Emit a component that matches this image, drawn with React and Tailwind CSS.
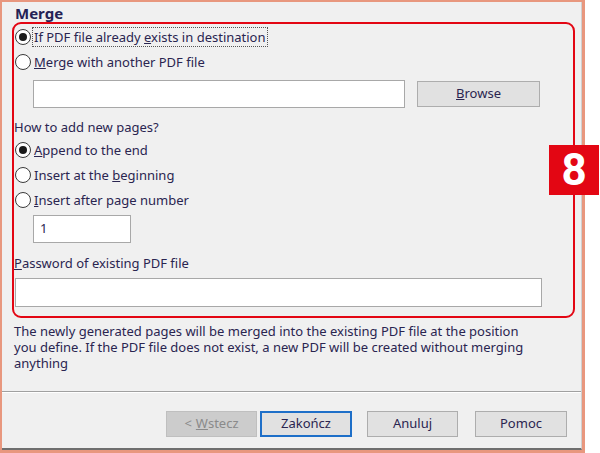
import React from 'react';

const font = { fontFamily: '"Noto Sans", "Open Sans", sans-serif' };

function Radio({ checked, children, focus }) {
  return (
    <div className="flex items-center h-[25px]">
      <div className="ml-[1px] w-[16px] h-[16px] rounded-full border border-[#3a3a3a] bg-white flex items-center justify-center shrink-0">
        {checked && <div className="w-[8px] h-[8px] rounded-full bg-[#1a1a1a]" />}
      </div>
      <span
        className={`ml-[2px] px-[1px] leading-[18px] ${
          focus ? 'outline outline-1 outline-dotted outline-[#555]' : ''
        }`}
      >
        {children}
      </span>
    </div>
  );
}

function Btn({ children, disabled, primary, className = '' }) {
  return (
    <div
      className={`h-[26px] flex items-center justify-center text-[13px] ${
        disabled
          ? 'bg-[#cccccc] border border-[#bfbfbf] text-[#8a8a8a]'
          : primary
          ? 'bg-[#e1e1e1] border-2 border-[#1e6fc8]'
          : 'bg-[#e1e1e1] border border-[#adadad]'
      } ${className}`}
    >
      {children}
    </div>
  );
}

export default function App() {
  return (
    <div className="w-[600px] h-[453px] bg-white relative overflow-hidden text-[#2a2550]" style={font}>
      <div className="w-[585px] h-[453px] border-t-2 border-l-2 border-r-[3px] border-b-[3px] border-[#e8977e]">
        <div className="h-full bg-[#f0f0f0] border-r border-r-[#d0d0d0] border-b-2 border-b-[#6e6e6e] flex flex-col">
          <div className="pl-[13px] pt-[1px] h-[20px] leading-[20px] text-[15px] font-bold text-[#252255]">Merge</div>

          <div className="ml-[10px] w-[563px] h-[296px] border-2 border-[#e30613] rounded-[9px] text-[13px]">
            <Radio checked focus>
              If PDF file already <span className="underline">e</span>xists in destination
            </Radio>
            <Radio>
              <span className="underline">M</span>erge with another PDF file
            </Radio>
            <div className="flex items-center mt-[6px] ml-[19px]">
              <div className="w-[372px] h-[28px] bg-white border border-[#a8a8a8]" />
              <Btn className="ml-[12px] w-[123px]">
                <span className="underline">B</span>rowse
              </Btn>
            </div>
            <div className="mt-[9px] h-[20px] leading-[20px]">How to add new pages?</div>
            <Radio checked>
              <span className="underline">A</span>ppend to the end
            </Radio>
            <Radio>
              Insert at the <span className="underline">b</span>eginning
            </Radio>
            <Radio>
              <span className="underline">I</span>nsert after page number
            </Radio>
            <div className="mt-[3px] ml-[19px] w-[98px] h-[28px] bg-white border border-[#a8a8a8] flex items-center pl-[6px]">
              1
            </div>
            <div className="mt-[10px] h-[20px] leading-[20px]">
              <span className="underline">P</span>assword of existing PDF file
            </div>
            <div className="mt-[5px] ml-[1px] w-[527px] h-[29px] bg-white border border-[#a8a8a8]" />
          </div>

          <div className="mt-[5px] pl-[12px] w-[540px] text-[13px] leading-[16px]">
            The newly generated pages will be merged into the existing PDF file at the position you define. If the PDF
            file does not exist, a new PDF will be created without merging anything
          </div>

          <div className="mt-auto border-t border-t-[#a0a0a0] bg-[#f0f0f0] h-[57px]">
            <div className="border-t border-t-white flex items-start pt-[18px]">
              <Btn disabled className="ml-[164px] w-[91px]">
                &lt; <span className="underline ml-[4px]">W</span>stecz
              </Btn>
              <Btn primary className="ml-[3px] w-[92px]">Zakończ</Btn>
              <Btn className="ml-[15px] w-[91px]">Anuluj</Btn>
              <Btn className="ml-[17px] w-[92px]">Pomoc</Btn>
            </div>
          </div>
        </div>
      </div>

      <div
        className="absolute left-[549px] top-[145px] w-[50px] h-[50px] bg-[#e30613] text-white flex items-center justify-center text-[44px] font-bold"
        style={{ fontFamily: '"Liberation Sans Narrow", "Roboto", sans-serif' }}
      >
        8
      </div>
    </div>
  );
}
